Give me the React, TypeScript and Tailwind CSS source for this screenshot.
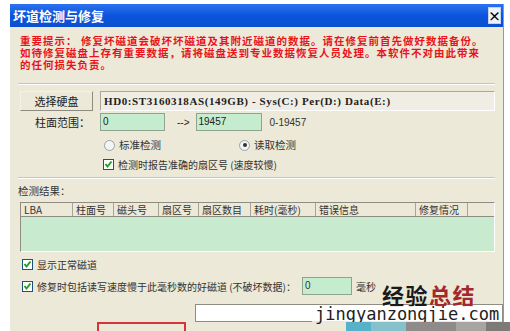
import React from 'react';

const cjk = { fontFamily: '"Noto Sans CJK SC", "Noto Sans", sans-serif' };
const num = { fontFamily: '"Liberation Sans", sans-serif' };

function Check({ on }: { on?: boolean }) {
    return (
        <span className="inline-flex h-[11px] w-[11px] shrink-0 items-center justify-center border border-[#1c5180] bg-white">
            {on && (
                <svg width="9" height="9" viewBox="0 0 9 9">
                    <path d="M1.5 4 L3.5 6.5 L7.5 1.5" stroke="#21a121" strokeWidth="2" fill="none" />
                </svg>
            )}
        </span>
    );
}

function Radio({ on }: { on?: boolean }) {
    return (
        <span className="inline-flex h-[11px] w-[11px] shrink-0 items-center justify-center rounded-full border border-[#9aa3ad] bg-[#f4f4f0]">
            {on && <span className="h-[4px] w-[4px] rounded-full bg-[#333]" />}
        </span>
    );
}

export default function App() {
    const cols = [
        { t: 'LBA', w: 'w-[52px]' },
        { t: '柱面号', w: 'w-[41px]' },
        { t: '磁头号', w: 'w-[45px]' },
        { t: '扇区号', w: 'w-[40px]' },
        { t: '扇区数目', w: 'w-[52px]' },
        { t: '耗时(毫秒)', w: 'w-[65px]' },
        { t: '错误信息', w: 'w-[100px]' },
        { t: '修复情况', w: 'w-[52px]' },
    ];

    return (
        <div className="relative h-[331px] w-[510px] overflow-hidden bg-white text-[#222]" style={cjk}>
            <div className="ml-[10px] mt-[4px] flex w-[494px] flex-col border-r border-[#9c9a8e]">
                {/* title bar */}
                <div className="flex h-[23px] items-center justify-between bg-gradient-to-b from-[#2b73ef] via-[#0b55dc] to-[#0a4fd0] pl-[3px] pr-[2px]">
                    <span className="text-[13px] font-bold text-white">坏道检测与修复</span>
                    <span className="flex h-[17px] w-[13px] items-center justify-center border border-[#c5d3ea] bg-[#eef2fa] text-[13px] font-bold leading-none text-black">×</span>
                </div>

                <div className="flex flex-col bg-[#ece9d8] pb-[40px]">
                    {/* warning */}
                    <div className="pl-[10px] pt-[8px] text-[10.5px] font-bold leading-[12px] tracking-[1px] text-[#e8141c] whitespace-nowrap">
                        <div>重要提示：&nbsp;修复坏磁道会破坏坏磁道及其附近磁道的数据。请在修复前首先做好数据备份。</div>
                        <div>如待修复磁盘上存有重要数据，请将磁盘送到专业数据恢复人员处理。本软件不对由此带来</div>
                        <div>的任何损失负责。</div>
                    </div>

                    <div className="mx-[8px] mt-[12px] border-t border-[#c9c6b6] border-b-white border-b" />

                    {/* disk select */}
                    <div className="mt-[6px] flex items-center pl-[10px] pr-[8px]">
                        <button className="h-[20px] w-[73px] border border-[#f4f2ea] border-b-[#8e8c80] border-r-[#8e8c80] bg-[#ece9d8] text-[11px] leading-none">选择硬盘</button>
                        <div className="ml-[7px] flex h-[20px] flex-1 items-center border-t border-l border-[#a9a69a] border-b border-r border-b-white border-r-white bg-[#f0eee4] pl-[3px] text-[11px] font-bold tracking-[0.6px]" style={{ fontFamily: '"Liberation Serif", serif' }}>
                            HD0:ST3160318AS(149GB) - Sys(C:) Per(D:) Data(E:)
                        </div>
                    </div>

                    {/* range */}
                    <div className="mt-[2px] flex h-[18px] items-center text-[11px]">
                        <span className="w-[80px] text-right">柱面范围：</span>
                        <div className="ml-[10px] h-[18px] w-[65px] border border-[#8ea48f] bg-[#c6ecd0] pl-[2px] text-[10px] leading-[16px]" style={num}>0</div>
                        <span className="ml-[12px] text-[10px]" style={num}>--&gt;</span>
                        <div className="ml-[6px] h-[18px] w-[66px] border border-[#8ea48f] bg-[#c6ecd0] pl-[2px] text-[10px] leading-[16px]" style={num}>19457</div>
                        <span className="ml-[8px] text-[10px] text-[#333]" style={num}>0-19457</span>
                    </div>

                    {/* radios */}
                    <div className="mt-[7px] flex h-[14px] items-center text-[10.5px] text-[#333]">
                        <span className="ml-[94px] flex items-center gap-[4px]"><Radio />标准检测</span>
                        <span className="ml-[78px] flex items-center gap-[4px]"><Radio on />读取检测</span>
                    </div>
                    <div className="mt-[5px] flex h-[14px] items-center gap-[4px] pl-[93px] text-[10px] text-[#333]">
                        <Check on />检测时报告准确的扇区号 (速度较慢)
                    </div>

                    <div className="mx-[8px] mt-[6px] border-t border-[#c9c6b6] border-b-white border-b" />

                    <div className="mt-[5px] h-[14px] pl-[8px] text-[10.5px] leading-[14px] text-[#333]">检测结果：</div>

                    {/* results table */}
                    <div className="ml-[10px] mr-[8px] mt-[4px] flex h-[50px] flex-col border border-[#8f8d82] border-b-white border-r-white">
                        <div className="flex h-[14px] shrink-0 border-b border-[#8f8d82] bg-[#ece9d8] text-[10px] leading-[13px] text-[#333]">
                            {cols.map((c) => (
                                <div key={c.t} className={`${c.w} border-r border-[#a7a59a] pl-[3px] whitespace-nowrap`}>{c.t}</div>
                            ))}
                        </div>
                        <div className="flex-1 bg-[#c8ebcf]" />
                    </div>

                    <div className="mt-[5px] flex h-[14px] items-center gap-[4px] pl-[12px] text-[10px] text-[#333]">
                        <Check on />显示正常磁道
                    </div>
                    <div className="mt-[6px] flex h-[18px] items-center text-[10px] text-[#333]">
                        <span className="flex items-center gap-[4px] whitespace-nowrap pl-[12px]"><Check on />修复时包括读写速度慢于此毫秒数的好磁道 (不破坏数据)：</span>
                        <div className="ml-[6px] h-[18px] w-[50px] border border-[#8ea48f] bg-[#c6ecd0] pl-[2px] text-[10px] leading-[16px]" style={num}>0</div>
                        <span className="ml-[4px]">毫秒</span>
                    </div>

                    <div className="ml-[185px] mt-[9px] h-[18px] border border-[#8f8d82] bg-white" />
                </div>
            </div>

            {/* highlighted button in red annotation */}
            <div className="absolute left-[97px] top-[322px] h-[14px] w-[89px] border-2 border-[#d7343a]" />

            {/* watermark */}
            <div className="absolute left-[382px] top-[283px] text-[22px] font-bold leading-[22px] tracking-[1.5px]" style={cjk}>
                <span className="text-[#1a1a1a]">经验</span><span className="text-[#a4272c]">总结</span>
            </div>
            <div className="absolute left-[312px] top-[306px] bg-white/80 px-[3px] text-[17px] leading-[16px] text-[#222]" style={{ fontFamily: '"DejaVu Sans Mono", monospace' }}>
                jingyanzongjie.com
            </div>
            <div className="absolute left-[346px] top-[322px] flex h-[9px]">
                <div className="w-[25px] bg-[#56b2c9]" />
                <div className="w-[35px] bg-[#86c0cb]" />
                <div className="w-[50px] bg-[#8f8b89]" />
                <div className="w-[30px] bg-[#a7a5a1]" />
                <div className="w-[24px] bg-[#7d7a77]" />
            </div>
        </div>
    );
}
